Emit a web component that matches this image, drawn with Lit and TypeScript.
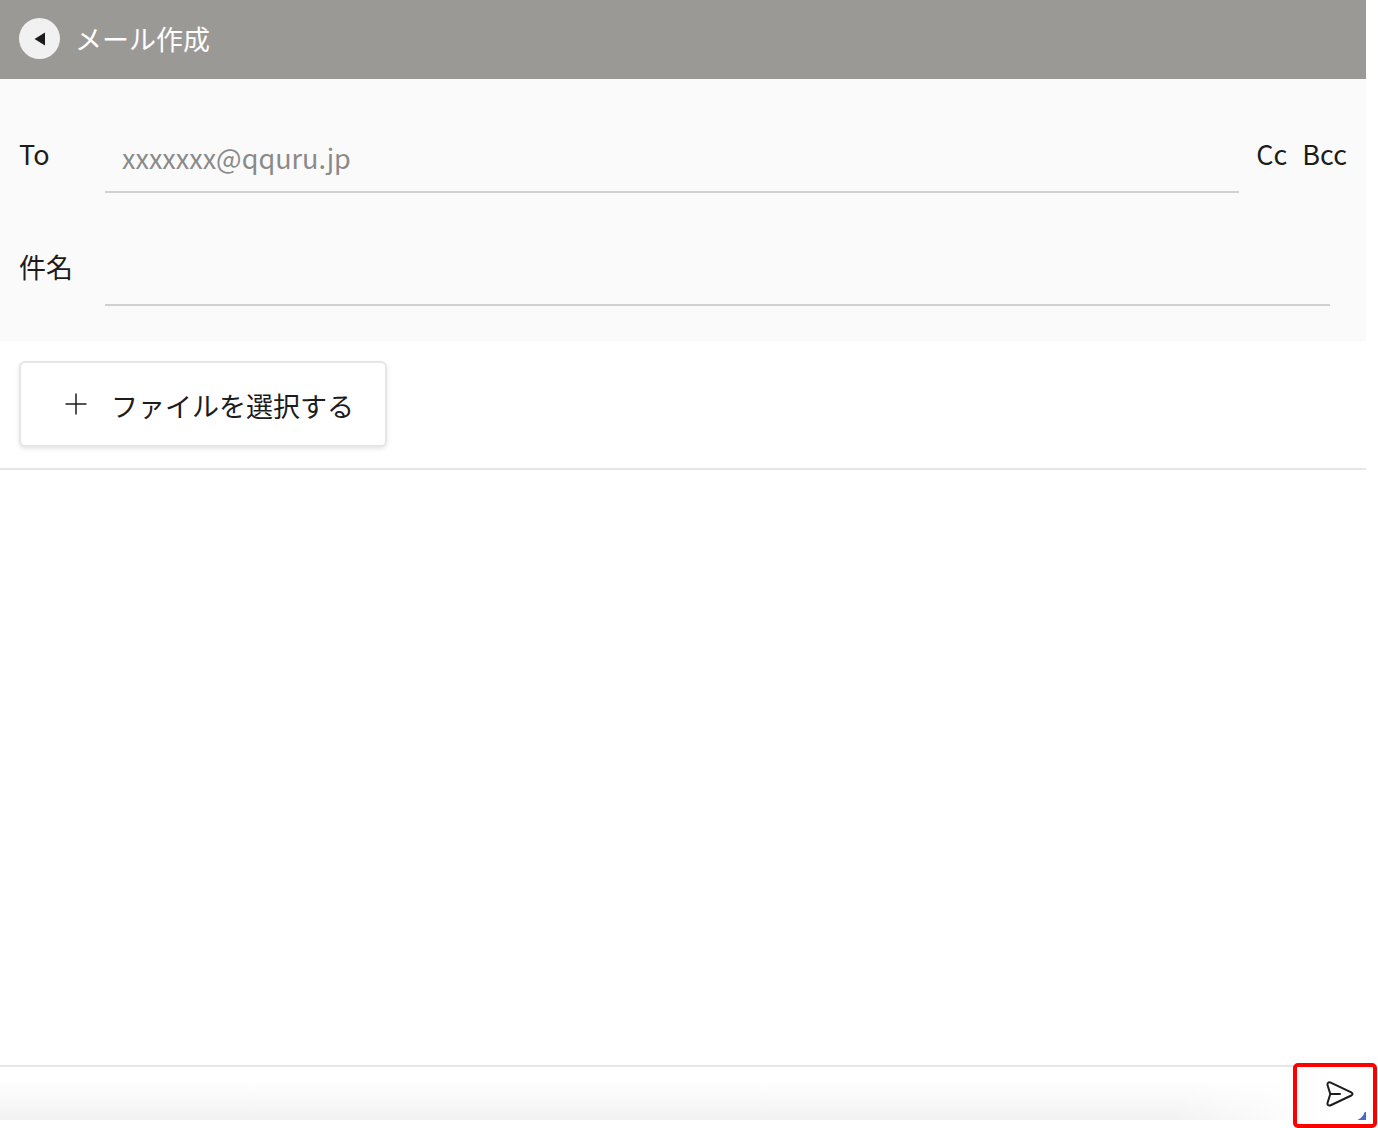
import { LitElement, html, css } from "lit";
import { customElement } from "lit/decorators.js";

@customElement("app-root")
export class AppRoot extends LitElement {
  static styles = css`
    :host {
      display: block;
      background: #fff;
      color: #1c1c1c;
      font-family: "Noto Sans CJK JP", "Noto Sans", sans-serif;
      font-size: 27px;
      line-height: 40px;
    }
    * {
      box-sizing: border-box;
    }
    button,
    input,
    textarea {
      font: inherit;
      color: inherit;
      margin: 0;
      padding: 0;
      border: 0;
      border-radius: 0;
      background: none;
      outline: none;
    }
    button {
      cursor: pointer;
    }
    .page {
      position: relative;
      display: flex;
      flex-direction: column;
      min-height: 100vh;
      padding: 0 12px 8px 0;
    }
    .header {
      display: flex;
      align-items: center;
      gap: 15px;
      height: 79px;
      padding: 0 19px 2px;
      background: #9b9996;
      color: #fff;
    }
    .back {
      display: grid;
      place-items: center;
      width: 41px;
      height: 41px;
      border-radius: 50%;
      background: #f1f1f1;
    }
    .title {
      margin: 0;
      font-size: 27px;
      font-weight: 400;
    }
    .fields {
      display: flex;
      flex-direction: column;
      gap: 47px;
      padding: 48px 0 35px 19px;
      background: #fafafa;
    }
    .field {
      display: flex;
      align-items: flex-start;
      padding-right: 19px;
    }
    .field.subject {
      padding-right: 36px;
    }
    .label {
      flex: none;
      width: 86px;
      line-height: 54px;
    }
    .entry {
      flex: 1;
      min-width: 0;
      height: 66px;
      padding: 0 17px 4px;
      border-bottom: 2px solid #d0d0d0;
    }
    .entry::placeholder {
      color: #8a8a8a;
      opacity: 1;
    }
    .copies {
      display: flex;
      gap: 15px;
      padding-left: 17px;
      line-height: 54px;
    }
    .attach {
      display: flex;
      padding: 20px 19px 21px;
      border-bottom: 2px solid #e6e6e6;
    }
    .file {
      display: flex;
      align-items: center;
      gap: 24px;
      height: 86px;
      padding: 0 31px 0 44px;
      border: 2px solid #e6e6e6;
      border-radius: 6px;
      background: #fff;
      box-shadow: 0 2px 4px rgba(0, 0, 0, 0.1);
    }
    .file-text {
      padding-top: 3px;
    }
    .body {
      flex: 1;
      display: block;
      width: 100%;
      min-height: 200px;
      padding: 16px 19px;
      resize: none;
    }
    .footer {
      height: 55px;
      border-top: 2px solid #e6e6e6;
      background:
        linear-gradient(to right, rgba(255, 255, 255, 0) 86%, #fff 97%),
        linear-gradient(#fff 25%, #f2f2f2);
    }
    .send {
      position: absolute;
      right: 1px;
      bottom: 0;
      width: 84px;
      height: 65px;
      padding: 0 0 3px 10px;
      border: 4px solid #f00;
      border-radius: 5px;
      background: linear-gradient(to right, #fcfcfc, #fff 50%);
      display: grid;
      place-items: center;
    }
    .corner {
      position: absolute;
      right: 7px;
      bottom: 4px;
    }
    svg {
      display: block;
    }
  `;

  render() {
    return html`
      <main class="page">
        <header class="header">
          <button class="back" type="button" aria-label="戻る">
            <svg width="12" height="14" viewBox="0 0 12 14" aria-hidden="true">
              <path d="M11 0.5V13.5L0.5 7Z" fill="#1c1c1c" />
            </svg>
          </button>
          <h1 class="title">メール作成</h1>
        </header>
        <section class="fields">
          <div class="field">
            <label class="label" for="to">To</label>
            <input class="entry" id="to" type="email" placeholder="xxxxxxx@qquru.jp" />
            <div class="copies">
              <button type="button">Cc</button>
              <button type="button">Bcc</button>
            </div>
          </div>
          <div class="field subject">
            <label class="label" for="subject">件名</label>
            <input class="entry" id="subject" type="text" />
          </div>
        </section>
        <div class="attach">
          <button class="file" type="button">
            <svg width="22" height="22" viewBox="0 0 22 22" aria-hidden="true">
              <path d="M11 0.5V21.5M0.5 11H21.5" fill="none" stroke="#1c1c1c" stroke-width="1.5" />
            </svg>
            <span class="file-text">ファイルを選択する</span>
          </button>
        </div>
        <textarea class="body" aria-label="本文"></textarea>
        <footer class="footer"></footer>
        <button class="send" type="button" aria-label="送信">
          <svg width="28" height="26" viewBox="0 0 28 26" aria-hidden="true">
            <path
              d="M4.2 1.4L25.3 11.4Q27.8 13 25.3 14.5L4.2 24.5Q1.2 25 1.5 22L4.3 13L1.5 4Q1.2 1 4.2 1.4ZM4.3 13H14"
              fill="none"
              stroke="#1c1c1c"
              stroke-width="2"
              stroke-linejoin="round"
              stroke-linecap="round"
            />
          </svg>
          <svg class="corner" width="8" height="8" viewBox="0 0 8 8" aria-hidden="true">
            <path d="M8 0V8H0V7.4Q4.5 6 6.8 0Z" fill="#4a69c4" />
          </svg>
        </button>
      </main>
    `;
  }
}
